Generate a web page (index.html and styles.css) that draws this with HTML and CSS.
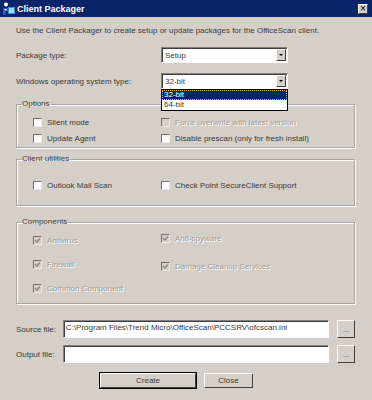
FILE: index.html
```html
<!DOCTYPE html>
<html lang="en">
<head>
<meta charset="UTF-8">
<meta name="viewport" content="width=device-width, initial-scale=1.0">
<title>Client Packager</title>
<link rel="stylesheet" href="styles.css">
</head>
<body>

<div class="window">
    <div class="titlebar">
        <svg class="app-icon" width="13" height="13" viewBox="0 0 13 13">
            <rect x="6" y="5" width="7" height="7" fill="#3a8ee6"/>
            <rect x="7" y="6" width="5" height="5" fill="#9fe0ff"/>
            <circle cx="4" cy="2.5" r="2" fill="#ffffff"/>
            <path d="M1 6 L7 6 L6 9 L4 9 L3 13 L1 13 Z" fill="#1d5fd8"/>
            <path d="M2 7 L5 7 L4 9 Z" fill="#ffffff"/>
        </svg>
        <span class="title">Client Packager</span>
        <span class="close-btn">&#215;</span>
    </div>

    <div class="content">
        <p class="intro">Use the Client Packager to create setup or update packages for the OfficeScan client.</p>

        <div class="field-row row-package">
            <span class="field-label">Package type:</span>
            <div class="select">
                <span class="select-value">Setup</span>
                <span class="select-arrow"></span>
            </div>
        </div>

        <div class="field-row row-os">
            <span class="field-label">Windows operating system type:</span>
            <div class="select">
                <span class="select-value">32-bit</span>
                <span class="select-arrow"></span>
                <ul class="dropdown">
                    <li class="selected">32-bit</li>
                    <li>64-bit</li>
                </ul>
            </div>
        </div>

        <fieldset class="group group-options">
            <legend>Options</legend>
            <div class="check-grid">
                <label class="check"><span class="box"></span>Silent mode</label>
                <label class="check disabled"><span class="box"></span>Force overwrite with latest version</label>
                <label class="check"><span class="box"></span>Update Agent</label>
                <label class="check"><span class="box"></span>Disable prescan (only for fresh install)</label>
            </div>
        </fieldset>

        <fieldset class="group group-utils">
            <legend>Client utilities</legend>
            <div class="check-grid">
                <label class="check"><span class="box"></span>Outlook Mail Scan</label>
                <label class="check"><span class="box"></span>Check Point SecureClient Support</label>
            </div>
        </fieldset>

        <fieldset class="group group-components">
            <legend>Components</legend>
            <div class="component-cols">
                <div class="col col-left">
                    <label class="check disabled checked"><span class="box"><svg viewBox="0 0 7 7"><path d="M1 3 L3 5 L6 1.5" /></svg></span>Antivirus</label>
                    <label class="check disabled checked"><span class="box"><svg viewBox="0 0 7 7"><path d="M1 3 L3 5 L6 1.5" /></svg></span>Firewall</label>
                    <label class="check disabled checked"><span class="box"><svg viewBox="0 0 7 7"><path d="M1 3 L3 5 L6 1.5" /></svg></span>Common Component</label>
                </div>
                <div class="col col-right">
                    <label class="check disabled checked"><span class="box"><svg viewBox="0 0 7 7"><path d="M1 3 L3 5 L6 1.5" /></svg></span>Anti-spyware</label>
                    <label class="check disabled checked"><span class="box"><svg viewBox="0 0 7 7"><path d="M1 3 L3 5 L6 1.5" /></svg></span>Damage Cleanup Services</label>
                </div>
            </div>
        </fieldset>

        <div class="file-row row-source">
            <span class="file-label">Source file:</span>
            <div class="textbox">C:\Program Files\Trend Micro\OfficeScan\PCCSRV\ofcscan.ini</div>
            <button class="browse">...</button>
        </div>
        <div class="file-row row-output">
            <span class="file-label">Output file:</span>
            <div class="textbox"></div>
            <button class="browse">...</button>
        </div>

        <div class="actions">
            <button class="btn btn-default">Create</button>
            <button class="btn">Close</button>
        </div>
    </div>
</div>

</body>
</html>
```

FILE: styles.css
```css
body {
    margin: 0;
    padding: 0;
    background-color: #d4d0c8;
    font-family: "Liberation Sans", Arial, sans-serif;
    font-size: 8px;
    color: #3a3a3a;
}
.window {
    width: 372px;
    height: 400px;
    overflow: hidden;
}

/* title bar */
.titlebar {
    height: 17px;
    background-color: #0a246a;
    display: flex;
    align-items: center;
    padding: 0 3px 0 2px;
}
.app-icon {
    margin-right: 2px;
}
.title {
    color: #fff;
    font-weight: bold;
    font-size: 9px;
    flex: 1;
}
.close-btn {
    width: 10px;
    height: 10px;
    box-sizing: border-box;
    background-color: #d4d0c8;
    border: 1px solid;
    border-color: #fff #404040 #404040 #fff;
    font-size: 10px;
    line-height: 7px;
    text-align: center;
    color: #000;
    margin-right: 1px;
}

/* content */
.content {
    padding: 0 17px 0 16px;
}
.intro {
    margin: 9px 0 0 0;
    line-height: 10px;
}
.field-row {
    display: flex;
    align-items: center;
    height: 16px;
}
.row-package {
    margin-top: 11px;
}
.row-os {
    margin-top: 10px;
}
.field-label {
    width: 145px;
}

/* combo box */
.select {
    position: relative;
    width: 127px;
    height: 16px;
    box-sizing: border-box;
    background-color: #fff;
    border: 1px solid;
    border-color: #808080 #fff #fff #808080;
    box-shadow: inset 1px 1px 0 #404040;
    display: flex;
    align-items: center;
}
.select-value {
    flex: 1;
    padding-left: 3px;
}
.select-arrow {
    width: 10px;
    height: 12px;
    margin-right: 1px;
    box-sizing: border-box;
    background-color: #d4d0c8;
    border: 1px solid;
    border-color: #fff #404040 #404040 #fff;
    position: relative;
}
.select-arrow::after {
    content: "";
    position: absolute;
    left: 2px;
    top: 4px;
    border-left: 2px solid transparent;
    border-right: 2px solid transparent;
    border-top: 2px solid #000;
}
.dropdown {
    position: absolute;
    top: 15px;
    left: -1px;
    width: 127px;
    box-sizing: border-box;
    margin: 0;
    padding: 0;
    list-style: none;
    background-color: #fff;
    border: 1px solid #000;
    z-index: 2;
}
.dropdown li {
    height: 10px;
    line-height: 10px;
    padding-left: 2px;
}
.dropdown li.selected {
    background-color: #0a246a;
    color: #fff;
    outline: 1px dotted #d8c070;
    outline-offset: -1px;
}

/* group boxes */
.group {
    margin: 0;
    padding: 0;
    border: 1px solid #a8a6a0;
    box-shadow: inset 1px 1px 0 #fff, 1px 1px 0 #fff;
}
.group legend {
    margin-left: 4px;
    padding: 0 1px;
    line-height: 10px;
}
.group-options {
    margin-top: 10px;
    padding: 7px 0 3px 0;
}
.group-utils {
    margin-top: 6px;
    padding: 15px 0 14px 0;
}
.group-components {
    margin-top: 11px;
    padding: 5px 0 9px 0;
}
.check-grid {
    display: grid;
    grid-template-columns: 128px 1fr;
    row-gap: 4px;
    padding-left: 16px;
}
.check {
    display: flex;
    align-items: center;
    height: 12px;
}
.box {
    width: 9px;
    height: 9px;
    box-sizing: border-box;
    background-color: #fff;
    border: 1px solid;
    border-color: #707070 #e8e8e8 #e8e8e8 #707070;
    margin-right: 5px;
    display: flex;
}
.box svg {
    width: 7px;
    height: 7px;
}
.box svg path {
    fill: none;
    stroke: #8a8a8a;
    stroke-width: 1.4;
}
.disabled {
    color: #a09e98;
    text-shadow: 1px 1px 0 #fff;
}
.disabled .box {
    background-color: #d4d0c8;
}
.component-cols {
    display: flex;
    padding-left: 16px;
}
.col {
    display: flex;
    flex-direction: column;
}
.col-left {
    width: 128px;
    padding-top: 2px;
    gap: 12px;
}
.col-right {
    gap: 16px;
}

/* file fields */
.file-row {
    display: flex;
    align-items: center;
    height: 18px;
}
.row-source {
    margin-top: 16px;
}
.row-output {
    margin-top: 7px;
}
.file-label {
    width: 47px;
}
.textbox {
    width: 267px;
    height: 18px;
    box-sizing: border-box;
    background-color: #fff;
    border: 1px solid;
    border-color: #808080 #fff #fff #808080;
    box-shadow: inset 1px 1px 0 #404040;
    padding: 2px 0 0 2px;
    white-space: nowrap;
    overflow: hidden;
}
.browse {
    margin-left: 8px;
    width: 18px;
    height: 18px;
    padding: 0;
    box-sizing: border-box;
    background-color: #d4d0c8;
    border: 1px solid;
    border-color: #fff #404040 #404040 #fff;
    font-family: inherit;
    font-size: 7px;
    color: #444;
}

/* buttons */
.actions {
    display: flex;
    margin-top: 10px;
    padding-left: 84px;
    gap: 8px;
}
.btn {
    height: 15px;
    width: 49px;
    padding: 0;
    box-sizing: border-box;
    background-color: #d4d0c8;
    border: 1px solid;
    border-color: #fff #404040 #404040 #fff;
    font-family: inherit;
    font-size: 8px;
    color: #3a3a3a;
}
.btn-default {
    width: 96px;
    outline: 1px solid #000;
}
```
